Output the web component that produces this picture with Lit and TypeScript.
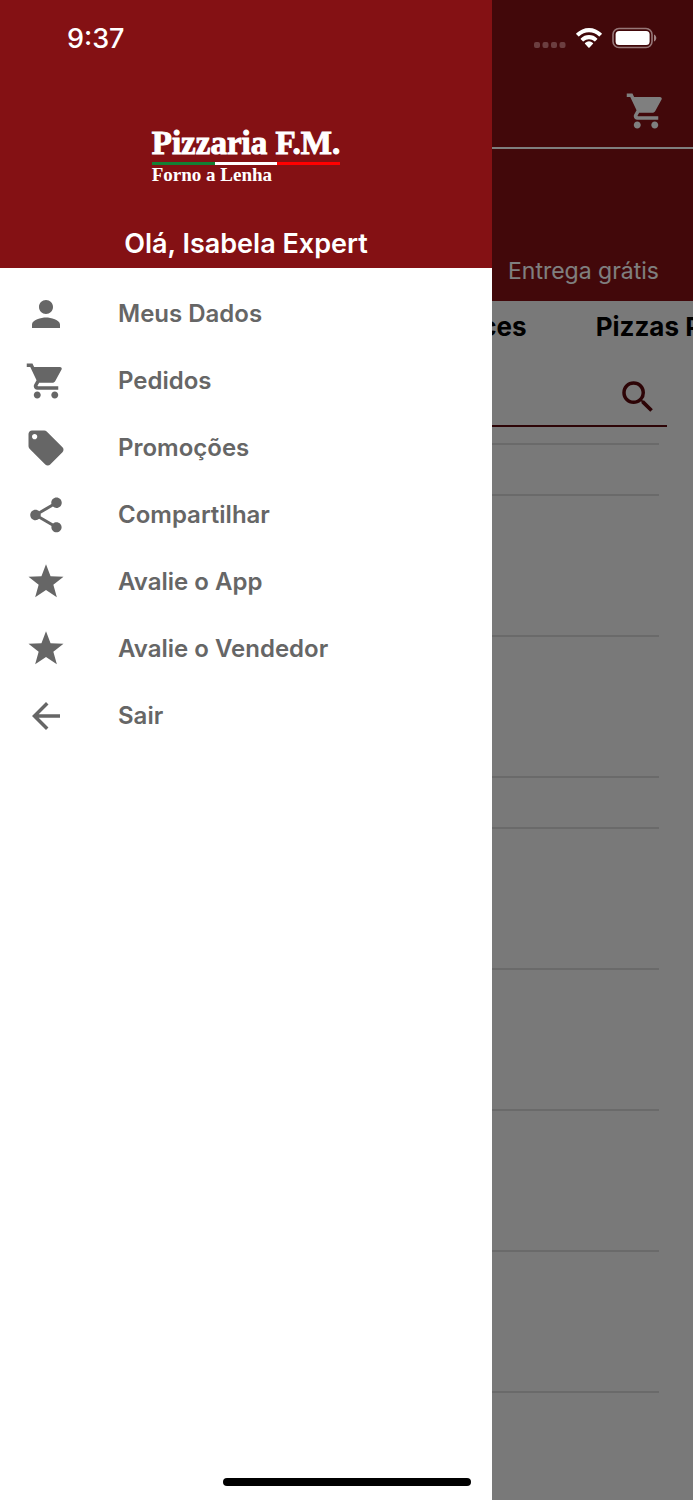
import { LitElement, html, css, svg } from "lit";
import { customElement } from "lit/decorators.js";

const ICONS = {
  person: svg`<path d="M12 12c2.210 0 4-1.790 4-4s-1.790-4-4-4-4 1.790-4 4 1.790 4 4 4zm0 2c-2.670 0-8 1.340-8 4v2h16v-2c0-2.660-5.330-4-8-4z"/>`,
  cart: svg`<path d="M7 18c-1.100 0-1.990.9-1.990 2S5.900 22 7 22s2-.9 2-2-.9-2-2-2zM1 2v2h2l3.600 7.590-1.350 2.450c-.16.28-.25.610-.25.960 0 1.100.9 2 2 2h12v-2H7.420c-.140 0-.250-.110-.250-.250l.030-.120.900-1.630h7.450c.750 0 1.410-.410 1.750-1.030l3.580-6.490c.080-.140.120-.310.120-.480 0-.550-.450-1-1-1H5.210l-.940-2H1zm16 16c-1.100 0-1.990.9-1.990 2s.890 2 1.990 2 2-.9 2-2-.9-2-2-2z"/>`,
  tag: svg`<path d="M21.410 11.580l-9-9C12.050 2.220 11.550 2 11 2H4c-1.100 0-2 .9-2 2v7c0 .550.220 1.050.590 1.420l9 9c.360.360.860.580 1.410.580.550 0 1.050-.220 1.410-.590l7-7c.370-.360.590-.860.590-1.410 0-.550-.230-1.060-.590-1.420zM5.500 7C4.670 7 4 6.330 4 5.500S4.670 4 5.500 4 7 4.670 7 5.500 6.330 7 5.500 7z"/>`,
  share: svg`<path d="M18 16.080c-.760 0-1.440.300-1.960.770L8.910 12.700c.050-.230.090-.460.090-.700s-.040-.470-.090-.700l7.050-4.110c.540.500 1.250.810 2.040.810 1.660 0 3-1.340 3-3s-1.340-3-3-3-3 1.340-3 3c0 .240.040.470.090.700L8.040 9.810C7.500 9.310 6.790 9 6 9c-1.660 0-3 1.340-3 3s1.340 3 3 3c.790 0 1.500-.310 2.040-.810l7.120 4.160c-.050.210-.080.430-.080.650 0 1.610 1.310 2.920 2.920 2.920s2.920-1.310 2.920-2.920-1.310-2.920-2.920-2.920z"/>`,
  star: svg`<path d="M12 1.800l2.600 6.900 7.400.3-5.800 4.600 2 7.100-6.200-4.100-6.200 4.100 2-7.100L2 9l7.400-.3z"/>`,
  back: svg`<path d="M20 11H7.830l5.590-5.590L12 4l-8 8 8 8 1.410-1.410L7.830 13H20v-2z"/>`,
  search: svg`<path d="M15.500 14h-.790l-.280-.270A6.471 6.471 0 0 0 16 9.500 6.500 6.500 0 1 0 9.500 16c1.610 0 3.090-.590 4.230-1.570l.270.280v.790l5 4.990L20.490 19l-4.990-5zm-6 0C7.010 14 5 11.990 5 9.500S7.010 5 9.500 5 14 7.010 14 9.500 11.990 14 9.500 14z"/>`,
};

type IconName = keyof typeof ICONS;

const MENU: { icon: IconName; label: string }[] = [
  { icon: "person", label: "Meus Dados" },
  { icon: "cart", label: "Pedidos" },
  { icon: "tag", label: "Promoções" },
  { icon: "share", label: "Compartilhar" },
  { icon: "star", label: "Avalie o App" },
  { icon: "star", label: "Avalie o Vendedor" },
  { icon: "back", label: "Sair" },
];

const ROWS = ["group", "item", "item", "group", "item", "item", "item", "item"];

const icon = (name: IconName) =>
  html`<svg class="icon" viewBox="0 0 24 24" aria-hidden="true">${ICONS[name]}</svg>`;

@customElement("store-page")
export class StorePage extends LitElement {
  static styles = css`
    :host {
      display: block;
      background: #f2f2f2;
      color: #000;
    }
    * {
      box-sizing: border-box;
    }
    button {
      display: block;
      padding: 0;
      border: 0;
      background: none;
      color: inherit;
      font: inherit;
    }
    .icon {
      display: block;
      width: 42px;
      height: 42px;
      fill: currentColor;
    }
    .toolbar {
      display: flex;
      justify-content: flex-end;
      padding: 90px 26px 15px;
      border-bottom: 2px solid #fff;
      background: #841114;
      color: #fff;
    }
    .banner {
      display: flex;
      align-items: flex-end;
      justify-content: flex-end;
      height: 152px;
      padding: 0 34px 15px;
      background: #841114;
      color: #fff;
      font-size: 23px;
      line-height: 30px;
    }
    .tabs {
      display: flex;
      gap: 69px;
      overflow: hidden;
      font-size: 26px;
      font-weight: 700;
      line-height: 52px;
      white-space: nowrap;
    }
    .tab {
      flex: none;
    }
    .tab.current {
      width: 76%;
      text-align: right;
    }
    .search {
      display: flex;
      align-items: center;
      margin: 0 26px 16px;
      padding: 23px 8px 7px;
      border-bottom: 2px solid #5a080c;
      color: #5a080c;
    }
    .field {
      flex: 1;
      min-width: 0;
      border: 0;
      background: none;
      font: inherit;
    }
    .list {
      margin: 0 34px;
      padding: 0;
      border-top: 2px solid #d4d4d4;
      list-style: none;
    }
    .row {
      border-bottom: 2px solid #d4d4d4;
    }
    .group {
      height: 51px;
    }
    .item {
      height: 141px;
    }
  `;

  render() {
    return html`
      <header class="toolbar">
        <button aria-label="Carrinho">${icon("cart")}</button>
      </header>
      <div class="banner">Entrega grátis</div>
      <div class="tabs">
        <button class="tab current">Doces</button>
        <button class="tab">Pizzas P</button>
      </div>
      <div class="search">
        <input class="field" type="search" aria-label="Buscar" />
        <button aria-label="Pesquisar">${icon("search")}</button>
      </div>
      <ul class="list">
        ${ROWS.map((kind) => html`<li class="row ${kind}"></li>`)}
      </ul>
    `;
  }
}

@customElement("side-drawer")
export class SideDrawer extends LitElement {
  static styles = css`
    :host {
      display: block;
      background: #fff;
    }
    * {
      box-sizing: border-box;
    }
    .head {
      display: flex;
      flex-direction: column;
      align-items: center;
      height: 268px;
      padding-top: 125px;
      background: #841114;
      color: #fff;
    }
    .logo {
      font-family: "Liberation Serif", serif;
      font-weight: 700;
    }
    .name {
      font-size: 33px;
      line-height: 37px;
      -webkit-text-stroke: 1px currentColor;
    }
    .flag {
      display: flex;
      height: 3px;
    }
    .band {
      flex: 1;
    }
    .green {
      background: #138034;
    }
    .white {
      background: #fff;
    }
    .red {
      background: #f00;
    }
    .motto {
      font-size: 19px;
      line-height: 20px;
    }
    .hello {
      margin: auto 0 0;
      padding-bottom: 8px;
      font-size: 27px;
      font-weight: 600;
      line-height: 32px;
    }
    .menu {
      padding-top: 12px;
    }
    .entry {
      display: flex;
      align-items: center;
      gap: 51px;
      width: 100%;
      height: 67px;
      padding: 0 25px;
      border: 0;
      background: none;
      color: #666;
      font: inherit;
      font-size: 24px;
      font-weight: 600;
      text-align: left;
    }
    .icon {
      flex: none;
      width: 42px;
      height: 42px;
      fill: currentColor;
    }
  `;

  render() {
    return html`
      <div class="head">
        <div class="logo">
          <div class="name">Pizzaria F.M.</div>
          <div class="flag">
            <span class="band green"></span>
            <span class="band white"></span>
            <span class="band red"></span>
          </div>
          <div class="motto">Forno a Lenha</div>
        </div>
        <p class="hello">Olá, Isabela Expert</p>
      </div>
      <nav class="menu">
        ${MENU.map(
          (entry) => html`<button class="entry">${icon(entry.icon)}<span>${entry.label}</span></button>`
        )}
      </nav>
    `;
  }
}

@customElement("status-bar")
export class StatusBar extends LitElement {
  static styles = css`
    :host {
      display: flex;
      align-items: center;
      justify-content: space-between;
      height: 76px;
      padding: 0 36px 0 67px;
      box-sizing: border-box;
      color: #fff;
    }
    .time {
      font-size: 27px;
      font-weight: 500;
    }
    .signals {
      display: flex;
      align-items: center;
      gap: 10px;
    }
    .glyph {
      display: block;
      fill: currentColor;
    }
  `;

  render() {
    return html`
      <span class="time">9:37</span>
      <div class="signals">
        <svg class="glyph" width="32" height="20" viewBox="0 0 32 20" opacity="0.22" aria-hidden="true">
          <rect x="0" y="14" width="6" height="6" rx="2" />
          <rect x="8.500" y="14" width="6" height="6" rx="2" />
          <rect x="17" y="14" width="6" height="6" rx="2" />
          <rect x="25.500" y="14" width="6" height="6" rx="2" />
        </svg>
        <svg class="glyph" width="26" height="20" viewBox="1 0.500 24 17.500" preserveAspectRatio="none" aria-hidden="true">
          <path d="M13 4.200c3.500 0 6.700 1.300 9.100 3.600.2.200.5.200.7 0l1.900-1.900c.2-.2.2-.5 0-.7a17 17 0 0 0-23.400 0c-.2.200-.2.500 0 .7l1.900 1.900c.2.200.5.200.7 0A13.200 13.200 0 0 1 13 4.200z" />
          <path d="M13 10.300c1.900 0 3.700.7 5 1.900.2.200.5.200.7 0l1.900-1.900c.2-.2.200-.5 0-.7a11 11 0 0 0-15.200 0c-.2.200-.2.500 0 .7l1.900 1.900c.2.200.5.200.7 0a7.400 7.400 0 0 1 5-1.900z" />
          <path d="M16.700 14.300c.2-.2.200-.5 0-.7a5.700 5.700 0 0 0-7.400 0c-.2.200-.2.500 0 .7l3.300 3.400c.2.200.5.200.7 0z" />
        </svg>
        <svg class="glyph" width="45" height="22" viewBox="0 0 45 22" aria-hidden="true">
          <rect x="1" y="1.500" width="39" height="19" rx="6" fill="none" stroke="currentColor" stroke-width="1.600" opacity="0.450" />
          <rect x="3.600" y="4" width="34" height="14" rx="3.500" />
          <path d="M42 7.500v7c1.400-.6 2.300-2 2.300-3.500S43.400 8.100 42 7.500z" opacity="0.500" />
        </svg>
      </div>
    `;
  }
}

@customElement("app-root")
export class AppRoot extends LitElement {
  static styles = css`
    :host {
      display: block;
      position: relative;
      min-height: 100vh;
      overflow: hidden;
      background: #f2f2f2;
      font-family: Inter, "Liberation Sans", sans-serif;
    }
    .scrim {
      position: absolute;
      inset: 0;
      background: rgba(0, 0, 0, 0.5);
    }
    .drawer {
      position: absolute;
      inset: 0 auto 0 0;
      width: 71%;
    }
    .status {
      position: absolute;
      inset: 0 0 auto;
    }
    .home {
      position: absolute;
      bottom: 14px;
      left: 50%;
      width: 248px;
      height: 8px;
      border-radius: 4px;
      background: #000;
      transform: translateX(-50%);
    }
  `;

  render() {
    return html`
      <store-page></store-page>
      <div class="scrim"></div>
      <side-drawer class="drawer"></side-drawer>
      <status-bar class="status"></status-bar>
      <div class="home"></div>
    `;
  }
}
